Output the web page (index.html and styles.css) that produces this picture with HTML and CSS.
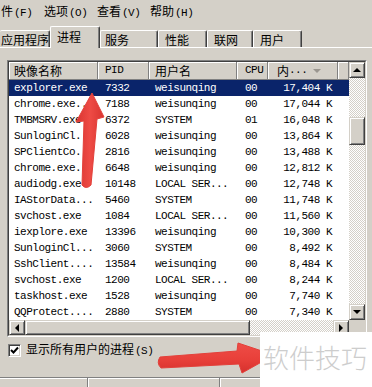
FILE: index.html
```html
<!DOCTYPE html>
<html lang="zh-CN">
<head>
<meta charset="utf-8">
<title>任务管理器</title>
<link rel="stylesheet" href="styles.css">
</head>
<body>
<div class="menubar">
  <span class="mi first">件<span class="hk">(F)</span></span>
  <span class="mi">选项<span class="hk">(O)</span></span>
  <span class="mi">查看<span class="hk">(V)</span></span>
  <span class="mi">帮助<span class="hk">(H)</span></span>
</div>
<div class="tabs">
  <div class="tab first">应用程序</div>
  <div class="tab sel">进程</div>
  <div class="tab t-svc">服务</div>
  <div class="tab t-perf">性能</div>
  <div class="tab t-net">联网</div>
  <div class="tab t-user">用户</div>
</div>
<div class="panel">
  <div class="lv">
    <div class="lv-in">
      <div class="main">
        <div class="cols hdr">
          <div class="c1">映像名称</div>
          <div class="c2 mono">PID</div>
          <div class="c3">用户名</div>
          <div class="c4 mono">CPU</div>
          <div class="c5 h-mem">内<span class="mono">...</span><span class="sort"></span></div>
          <div class="c6"></div>
        </div>
        <div class="rows">
          <div class="cols row sel"><span class="c1">explorer.exe</span><span class="c2">7332</span><span class="c3">weisunqing</span><span class="c4">00</span><span class="c5">17,404 K</span><span class="c6"></span></div>
          <div class="cols row"><span class="c1">chrome.exe...</span><span class="c2">7188</span><span class="c3">weisunqing</span><span class="c4">00</span><span class="c5">17,044 K</span><span class="c6"></span></div>
          <div class="cols row"><span class="c1">TMBMSRV.exe</span><span class="c2">6372</span><span class="c3">SYSTEM</span><span class="c4">01</span><span class="c5">16,048 K</span><span class="c6"></span></div>
          <div class="cols row"><span class="c1">SunloginCl...</span><span class="c2">6028</span><span class="c3">weisunqing</span><span class="c4">00</span><span class="c5">13,864 K</span><span class="c6"></span></div>
          <div class="cols row"><span class="c1">SPClientCo...</span><span class="c2">2816</span><span class="c3">weisunqing</span><span class="c4">00</span><span class="c5">13,488 K</span><span class="c6"></span></div>
          <div class="cols row"><span class="c1">chrome.exe...</span><span class="c2">6648</span><span class="c3">weisunqing</span><span class="c4">00</span><span class="c5">12,812 K</span><span class="c6"></span></div>
          <div class="cols row"><span class="c1">audiodg.exe</span><span class="c2">10148</span><span class="c3">LOCAL SER...</span><span class="c4">00</span><span class="c5">12,748 K</span><span class="c6"></span></div>
          <div class="cols row"><span class="c1">IAStorData...</span><span class="c2">5460</span><span class="c3">SYSTEM</span><span class="c4">00</span><span class="c5">11,748 K</span><span class="c6"></span></div>
          <div class="cols row"><span class="c1">svchost.exe</span><span class="c2">1084</span><span class="c3">LOCAL SER...</span><span class="c4">00</span><span class="c5">11,560 K</span><span class="c6"></span></div>
          <div class="cols row"><span class="c1">iexplore.exe</span><span class="c2">13396</span><span class="c3">weisunqing</span><span class="c4">00</span><span class="c5">10,300 K</span><span class="c6"></span></div>
          <div class="cols row"><span class="c1">SunloginCl...</span><span class="c2">3060</span><span class="c3">SYSTEM</span><span class="c4">00</span><span class="c5">8,492 K</span><span class="c6"></span></div>
          <div class="cols row"><span class="c1">SshClient....</span><span class="c2">13584</span><span class="c3">weisunqing</span><span class="c4">00</span><span class="c5">8,484 K</span><span class="c6"></span></div>
          <div class="cols row"><span class="c1">svchost.exe</span><span class="c2">1200</span><span class="c3">LOCAL SER...</span><span class="c4">00</span><span class="c5">8,244 K</span><span class="c6"></span></div>
          <div class="cols row"><span class="c1">taskhost.exe</span><span class="c2">1528</span><span class="c3">weisunqing</span><span class="c4">00</span><span class="c5">7,740 K</span><span class="c6"></span></div>
          <div class="cols row"><span class="c1">QQProtect....</span><span class="c2">2880</span><span class="c3">SYSTEM</span><span class="c4">00</span><span class="c5">7,340 K</span><span class="c6"></span></div>
        </div>
      </div>
      <div class="vscroll">
        <div class="btn"><span class="tri up"></span></div>
        <div class="track v"><div class="thumb vthumb"></div></div>
        <div class="btn"><span class="tri down"></span></div>
      </div>
      <div class="hscroll">
        <div class="btn hbtn"><span class="tri left"></span></div>
        <div class="thumb hthumb"></div>
        <div class="track h"></div>
        <div class="btn hbtn"><span class="tri right"></span></div>
      </div>
      <div class="corner"></div>
    </div>
  </div>
  <div class="chk">
    <span class="box"><svg width="9" height="9" viewBox="0 0 9 9"><path d="M1 4 L3.5 6.5 L8 1.5" fill="none" stroke="#000" stroke-width="2"/></svg></span>
    <span class="chk-label">显示所有用户的进程<span class="hk">(S)</span></span>
  </div>
</div>
<div class="status"><span class="s1"></span><span class="s2"></span><span class="s3"></span></div>

<svg class="arrows" width="372" height="387" viewBox="0 0 372 387">
  <defs>
    <linearGradient id="ga" x1="0" y1="0" x2="1" y2="0">
      <stop offset="0" stop-color="#d93430"/>
      <stop offset="0.5" stop-color="#ee4b45"/>
      <stop offset="1" stop-color="#d93430"/>
    </linearGradient>
    <linearGradient id="gb" x1="0" y1="0" x2="0" y2="1">
      <stop offset="0" stop-color="#ef4c46"/>
      <stop offset="0.55" stop-color="#e8403a"/>
      <stop offset="1" stop-color="#d6302d"/>
    </linearGradient>
  </defs>
  <path d="M92 93 L104 117 L97 119 L91 185 Q86 190 82 185 L84 121 L76 122 Z" fill="url(#ga)" stroke="#e3403a" stroke-width="1" stroke-linejoin="round"/>
  <path d="M160 357 L237 351 L238 343 L274 355 L242 373 L239 364 L161 368 Q156 363 160 357 Z" fill="url(#gb)" stroke="#e3403a" stroke-width="1" stroke-linejoin="round"/>
</svg>
<div class="wm">软件技巧</div>
</body>
</html>
```

FILE: styles.css
```css
* { box-sizing: border-box; }
html, body { margin: 0; padding: 0; }
body {
  width: 372px;
  height: 387px;
  overflow: hidden;
  position: relative;
  display: flex;
  flex-direction: column;
  background: #d4d0c8;
  color: #000;
  font-family: "Noto Sans CJK SC", "Noto Sans", sans-serif;
  font-size: 12px;
}
.mono, .hk {
  font-family: "Liberation Mono", "DejaVu Sans Mono", monospace;
  font-size: 11px;
  letter-spacing: -0.5px;
}

/* menu */
.menubar {
  display: flex;
  flex: none;
  height: 22px;
  line-height: 22px;
  padding-left: 1px;
}
.mi { flex: none; width: 53px; white-space: nowrap; }
.mi.first { width: 43px; }
.hk { margin-left: 1px; }

/* tabs */
.tabs {
  display: flex;
  flex: none;
  align-items: flex-end;
  height: 26px;
  border-bottom: 1px solid #fff;
}
.tab {
  flex: none;
  height: 17px;
  padding: 2px 0 0 6px;
  line-height: 14px;
  white-space: nowrap;
  border: 1px solid #fff;
  border-bottom: none;
  border-right-color: #404040;
  border-radius: 2px 2px 0 0;
  box-shadow: inset -1px 0 #808080;
  background: #d4d0c8;
}
.tab.first { width: 50px; padding-left: 1px; border-left: none; }
.tab.sel { width: 50px; height: 22px; margin-bottom: -1px; padding-top: 3px; padding-left: 6px; }
.t-svc { width: 58px; padding-left: 4px; }
.t-perf { width: 49px; }
.t-net { width: 46px; }
.t-user { width: 49px; }

/* panel */
.panel { flex: none; padding: 12px 0 0 7px; }
.lv {
  width: 360px;
  border: 1px solid;
  border-color: #808080 #fff #fff #808080;
}
.lv-in {
  display: grid;
  grid-template-columns: 340px 16px;
  grid-template-rows: 258px 15px;
  border: 1px solid;
  border-color: #404040 #d4d0c8 #d4d0c8 #404040;
  background: #fff;
}
.main { grid-column: 1; grid-row: 1; overflow: hidden; }
.cols {
  display: grid;
  grid-template-columns: 89px 51px 88px 31px 70px 11px;
}
.hdr { height: 18px; background: #d4d0c8; }
.hdr > div {
  line-height: 17px;
  white-space: nowrap;
  overflow: hidden;
  border-right: 1px solid #808080;
  border-bottom: 1px solid #808080;
  box-shadow: inset 1px 1px #fff;
}
.hdr .c5 { text-align: left; padding: 0 0 0 9px; }
.h-mem { display: flex; align-items: center; }
.sort {
  width: 0; height: 0;
  margin-left: auto;
  margin-right: 16px;
  border-left: 4px solid transparent;
  border-right: 4px solid transparent;
  border-top: 4px solid #9a968f;
}

.rows {
  font-family: "Liberation Mono", "DejaVu Sans Mono", monospace;
  font-size: 11px;
  letter-spacing: -0.5px;
}
.row { height: 16px; line-height: 16px; }
.row > span { white-space: nowrap; overflow: hidden; }
.row.sel { background: #0a246a; color: #fff; }
.c1 { padding-left: 5px; }
.c2 { padding-left: 7px; }
.c3 { padding-left: 6px; }
.c4 { padding-left: 8px; }
.c5 { text-align: right; padding-right: 6px; }

/* scrollbars */
.btn {
  flex: none;
  width: 16px;
  height: 16px;
  display: flex;
  align-items: center;
  justify-content: center;
  background: #d4d0c8;
  border: 1px solid;
  border-color: #d4d0c8 #404040 #404040 #d4d0c8;
  box-shadow: inset 1px 1px #fff, inset -1px -1px #808080;
}
.hbtn { height: 15px; }
.tri { width: 0; height: 0; }
.tri.up { border-left: 4px solid transparent; border-right: 4px solid transparent; border-bottom: 4px solid #000; }
.tri.down { border-left: 4px solid transparent; border-right: 4px solid transparent; border-top: 4px solid #000; }
.tri.left { border-top: 4px solid transparent; border-bottom: 4px solid transparent; border-right: 4px solid #000; }
.tri.right { border-top: 4px solid transparent; border-bottom: 4px solid transparent; border-left: 4px solid #000; }
.track {
  flex: 1;
  background: repeating-conic-gradient(#d4d0c8 0 25%, #fff 0 50%) 0 0 / 2px 2px;
}
.thumb {
  background: #d4d0c8;
  border: 1px solid;
  border-color: #d4d0c8 #404040 #404040 #d4d0c8;
  box-shadow: inset 1px 1px #fff, inset -1px -1px #808080;
}
.vscroll {
  grid-column: 2;
  grid-row: 1;
  display: flex;
  flex-direction: column;
}
.vthumb { width: 16px; height: 28px; margin-top: 39px; }
.hscroll {
  grid-column: 1;
  grid-row: 2;
  display: flex;
}
.hthumb { flex: none; width: 225px; height: 15px; }
.corner { grid-column: 2; grid-row: 2; background: #d4d0c8; }

/* checkbox */
.chk {
  display: flex;
  align-items: center;
  gap: 5px;
  height: 14px;
  margin: 6px 0 0 1px;
  white-space: nowrap;
}
.box {
  width: 13px;
  height: 13px;
  display: flex;
  align-items: center;
  justify-content: center;
  background: #fff;
  border: 1px solid;
  border-color: #808080 #fff #fff #808080;
  box-shadow: inset 1px 1px #404040, inset -1px -1px #d4d0c8;
}
.chk-label { line-height: 14px; }

/* status bar */
.status {
  flex: none;
  display: flex;
  height: 10px;
  margin-top: auto;
  border-top: 1px solid #808080;
  box-shadow: inset 0 1px #fff;
}
.status span { border-right: 1px solid #808080; box-shadow: 1px 0 #fff; }
.s1 { width: 88px; }
.s2 { width: 132px; }
.s3 { flex: 1; border-right: none; }

/* overlays */
.arrows { position: absolute; left: 0; top: 0; pointer-events: none; }
.wm {
  position: absolute;
  right: 0;
  bottom: 0;
  width: 112px;
  height: 55px;
  padding: 12px 0 0 3px;
  background: #fff;
  color: #cdcdcd;
  font-size: 26px;
  line-height: 26px;
  font-weight: 300;
  white-space: nowrap;
}
```
